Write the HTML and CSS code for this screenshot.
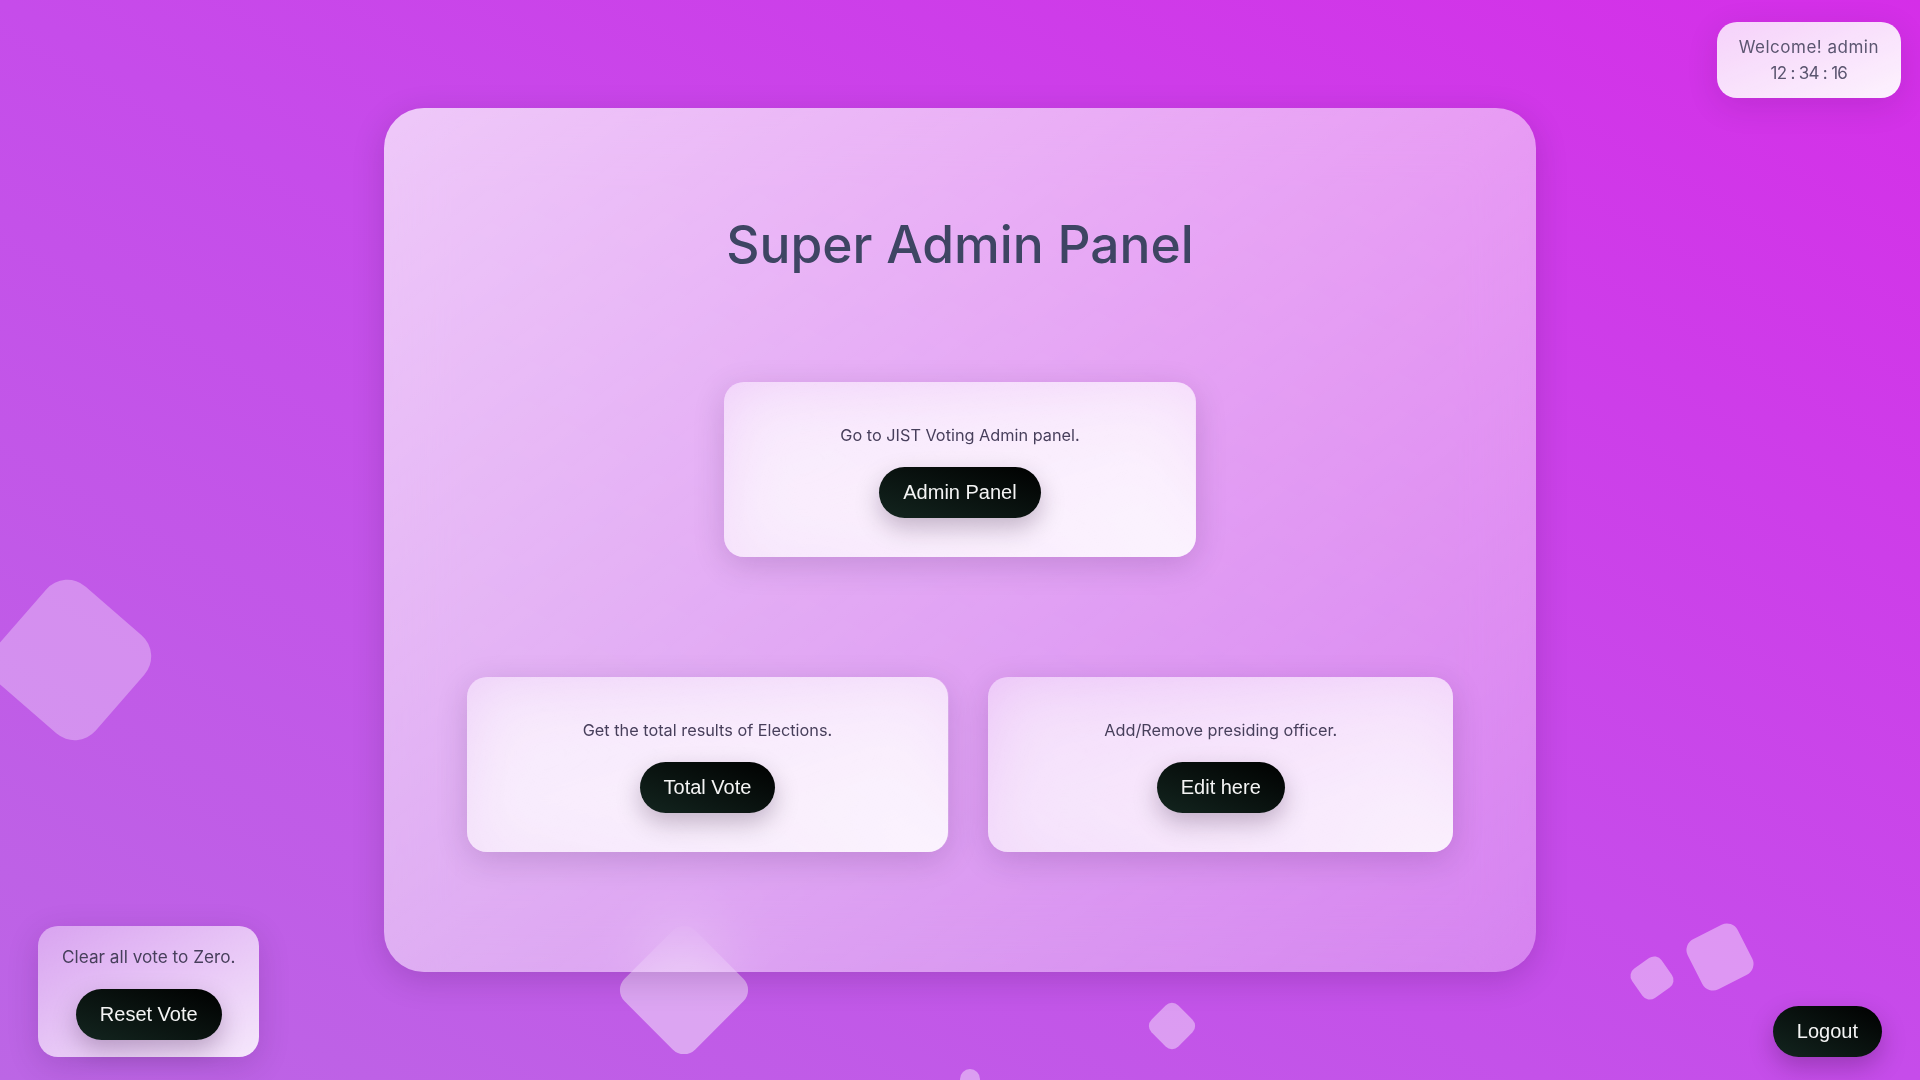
FILE: index.html
```html
<!DOCTYPE html>
<html lang="en">
<head>
<meta charset="utf-8">
<title>Super Admin Panel</title>
<link rel="stylesheet" href="styles.css">
</head>
<body>
<ul class="shapes" aria-hidden="true">
  <li class="shape shape-1"></li>
  <li class="shape shape-2"></li>
  <li class="shape shape-3"></li>
  <li class="shape shape-4"></li>
  <li class="shape shape-5"></li>
  <li class="shape shape-6"></li>
</ul>

<div class="welcome">
  <span class="welcome-name">Welcome! admin</span>
  <span class="welcome-time">12 : 34 : 16</span>
</div>

<main class="glass">
  <h1 class="title">Super Admin Panel</h1>
  <section class="card">
    <p class="card-text">Go to JIST Voting Admin panel.</p>
    <button class="btn">Admin Panel</button>
  </section>
  <div class="card-row">
    <section class="card">
      <p class="card-text">Get the total results of Elections.</p>
      <button class="btn">Total Vote</button>
    </section>
    <section class="card">
      <p class="card-text">Add/Remove presiding officer.</p>
      <button class="btn">Edit here</button>
    </section>
  </div>
</main>

<section class="card card-reset">
  <p class="card-text">Clear all vote to Zero.</p>
  <button class="btn">Reset Vote</button>
</section>

<button class="btn btn-logout">Logout</button>
</body>
</html>
```

FILE: styles.css
```css
* { box-sizing: border-box; }

html, body { height: 100%; }

body {
  margin: 0;
  overflow: hidden;
  display: flex;
  align-items: center;
  justify-content: center;
  font-family: "Inter", "Noto Sans", sans-serif;
  background: linear-gradient(to top right, #bc66e5 0%, #c64cea 50%, #d52ee8 100%);
}

.shapes {
  position: absolute;
  inset: 0;
  margin: 0;
  padding: 0;
  list-style: none;
  overflow: hidden;
}

.shape {
  position: absolute;
  background: rgba(255, 255, 255, 0.42);
}

.shape-1 { left: 6px; top: 595px; width: 130px; height: 130px; border-radius: 28px; transform: rotate(41deg); background: rgba(255,255,255,0.32); }
.shape-2 { left: 634px; top: 940px; width: 100px; height: 100px; border-radius: 16px; transform: rotate(45deg); background: rgba(255,255,255,0.45); }
.shape-3 { left: 1153px; top: 1007px; width: 38px; height: 38px; border-radius: 9px; transform: rotate(45deg); }
.shape-4 { left: 960px; top: 1069px; width: 20px; height: 20px; border-radius: 50%; }
.shape-5 { left: 1634px; top: 960px; width: 36px; height: 36px; border-radius: 9px; transform: rotate(-35deg); }
.shape-6 { left: 1692px; top: 929px; width: 56px; height: 56px; border-radius: 12px; transform: rotate(-27deg); }

.glass {
  position: relative;
  width: 1152px;
  height: 864px;
  padding-top: 104px;
  border-radius: 40px;
  display: flex;
  flex-direction: column;
  align-items: center;
  background: linear-gradient(to right bottom, rgba(255,255,255,0.7), rgba(255,255,255,0.3));
  backdrop-filter: blur(32px);
  box-shadow: 0 8px 32px rgba(40, 0, 60, 0.18);
}

.title {
  margin: 0;
  font-size: 51.5px;
  line-height: 64px;
  font-weight: 500;
  color: #3e4563;
}

.card {
  margin-top: 106px;
  padding: 41px 116px 39px;
  border-radius: 20px;
  display: flex;
  flex-direction: column;
  align-items: center;
  background: linear-gradient(to right bottom, rgba(255,255,255,0.34), rgba(255,255,255,0.86));
  backdrop-filter: blur(32px);
  box-shadow: 0 8px 32px rgba(40, 0, 60, 0.16);
}

.card-text {
  margin: 0 0 20px;
  font-size: 16.3px;
  line-height: 24px;
  color: #473f5b;
  white-space: nowrap;
}

.card-row {
  margin-top: 120px;
  display: flex;
  gap: 40px;
}

.card-row .card { margin-top: 0; }

.btn {
  font-family: "Liberation Sans", Arial, sans-serif;
  font-size: 20px;
  line-height: 23px;
  padding: 14px 24px;
  border: 0;
  border-radius: 30px;
  color: #f4f4f4;
  background: linear-gradient(to top right, #13251f, #000000);
  box-shadow: 0 10px 25px rgba(30, 0, 40, 0.25);
  cursor: pointer;
}

.card-reset {
  position: fixed;
  left: 38px;
  bottom: 23px;
  margin: 0;
  padding: 19px 24px 17px;
  background: linear-gradient(to right bottom, rgba(255,255,255,0.42), rgba(255,255,255,0.85));
}

.card-reset .card-text { font-size: 17.2px; }

.btn-logout {
  position: fixed;
  right: 38px;
  bottom: 23px;
}

.welcome {
  position: fixed;
  top: 22px;
  right: 19px;
  padding: 12px 22px;
  border-radius: 20px;
  display: flex;
  flex-direction: column;
  align-items: center;
  font-size: 17px;
  line-height: 26px;
  color: #5b5670;
  background: linear-gradient(to right bottom, rgba(255,255,255,0.78), rgba(255,255,255,0.94));
  box-shadow: 0 8px 32px rgba(40, 0, 60, 0.12);
}

.welcome-name { letter-spacing: 0.5px; }
.welcome-time { letter-spacing: -0.7px; }
```
